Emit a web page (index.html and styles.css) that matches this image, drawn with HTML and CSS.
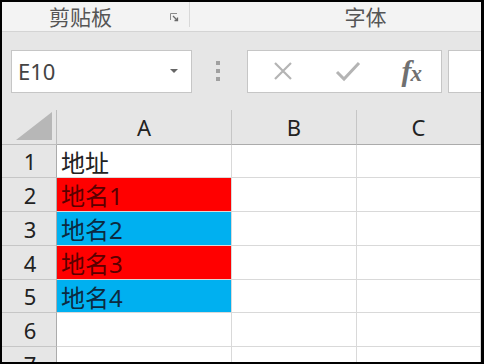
FILE: index.html
```html
<!DOCTYPE html>
<html lang="zh-CN">
<head>
    <meta charset="UTF-8">
    <meta name="viewport" content="width=device-width, initial-scale=1.0">
    <title>工作表</title>
    <link rel="stylesheet" href="styles.css">
</head>
<body>

    <div class="frame">
        <!-- Ribbon group labels -->
        <div class="ribbon-labels">
            <div class="group group-clip">
                <span>剪贴板</span>
                <svg class="launcher" width="9" height="9" viewBox="0 0 9 9">
                    <path d="M0.5 7 V0.5 H7" fill="none" stroke="#8a8a8a" stroke-width="1"/>
                    <path d="M3 3 L7.5 7.5 M4.5 7.5 H7.5 V4.5" fill="none" stroke="#6a6a6a" stroke-width="1.3"/>
                </svg>
            </div>
            <div class="group group-font"><span>字体</span></div>
        </div>

        <!-- Name box + formula bar -->
        <div class="formula-bar">
            <div class="name-box">
                <span>E10</span>
                <svg width="8" height="5" viewBox="0 0 8 5"><path d="M0 0 H8 L4 4 Z" fill="#666"/></svg>
            </div>
            <div class="grip"><i></i><i></i><i></i></div>
            <div class="fx-buttons">
                <svg width="22" height="22" viewBox="0 0 22 22">
                    <path d="M3 3 L19 19 M19 3 L3 19" stroke="#b4b4b4" stroke-width="2.2" fill="none"/>
                </svg>
                <svg width="26" height="22" viewBox="0 0 26 22">
                    <path d="M2 12 L9 19 L24 3" stroke="#b4b4b4" stroke-width="3" fill="none"/>
                </svg>
                <span class="fx"><i>f</i><i>x</i></span>
            </div>
            <div class="formula-input"></div>
        </div>

        <!-- Sheet grid -->
        <div class="sheet">
            <div class="corner">
                <svg width="36" height="28" viewBox="0 0 36 28"><path d="M36 0 V28 H0 Z" fill="#b7b7b7"/></svg>
            </div>
            <div class="col-head">A</div>
            <div class="col-head">B</div>
            <div class="col-head">C</div>

            <div class="row-head">1</div>
            <div class="cell">地址</div>
            <div class="cell"></div>
            <div class="cell"></div>

            <div class="row-head">2</div>
            <div class="cell red">地名1</div>
            <div class="cell"></div>
            <div class="cell"></div>

            <div class="row-head">3</div>
            <div class="cell blue">地名2</div>
            <div class="cell"></div>
            <div class="cell"></div>

            <div class="row-head">4</div>
            <div class="cell red">地名3</div>
            <div class="cell"></div>
            <div class="cell"></div>

            <div class="row-head">5</div>
            <div class="cell blue">地名4</div>
            <div class="cell"></div>
            <div class="cell"></div>

            <div class="row-head">6</div>
            <div class="cell"></div>
            <div class="cell"></div>
            <div class="cell"></div>

            <div class="row-head">7</div>
            <div class="cell"></div>
            <div class="cell"></div>
            <div class="cell"></div>
        </div>
    </div>

</body>
</html>
```

FILE: styles.css
```css
* {
    box-sizing: border-box;
}

body {
    margin: 0;
    background-color: #000;
    font-family: "Noto Sans", "Noto Sans CJK SC", sans-serif;
}

.frame {
    width: 479px;
    height: 360px;
    margin: 2px 3px 2px 2px;
    background-color: #e6e6e6;
    overflow: hidden;
}

/* Ribbon labels */
.ribbon-labels {
    display: flex;
    height: 30px;
    background-color: #f3f3f3;
    border-bottom: 1px solid #d4d4d4;
}

.group {
    display: flex;
    align-items: center;
    justify-content: center;
    height: 25px;
    font-family: "Noto Sans CJK SC", sans-serif;
    font-size: 21px;
    line-height: 1;
    color: #555;
}

.group-clip {
    position: relative;
    width: 188px;
    border-right: 1px solid #d8d8d8;
}

.group-clip span {
    margin-right: 30px;
    margin-top: 3px;
}

.launcher {
    position: absolute;
    right: 10px;
    top: 11px;
}

.group-font {
    flex: 1;
    padding-left: 60px;
}

.group-font span {
    margin-top: 3px;
}

/* Formula bar */
.formula-bar {
    display: flex;
    align-items: center;
    height: 78px;
    padding-left: 9px;
}

.name-box {
    display: flex;
    align-items: center;
    justify-content: space-between;
    width: 181px;
    height: 43px;
    padding: 0 13px 0 6px;
    background-color: #fff;
    border: 1px solid #c6c6c6;
    font-size: 22px;
    color: #444;
}

.grip {
    display: flex;
    flex-direction: column;
    gap: 4px;
    margin: 0 27px 0 24px;
}

.grip i {
    width: 4px;
    height: 4px;
    background-color: #a0a0a0;
}

.fx-buttons {
    display: flex;
    align-items: center;
    justify-content: space-between;
    width: 195px;
    height: 43px;
    padding: 0 20px 0 24px;
    background-color: #fff;
    border: 1px solid #c6c6c6;
}

.fx {
    font-family: "Liberation Serif", serif;
    font-size: 30px;
    font-style: italic;
    font-weight: bold;
    color: #707070;
    letter-spacing: -1px;
}

.fx i:last-child {
    font-size: 23px;
}

.formula-input {
    flex: 1;
    height: 43px;
    margin-left: 6px;
    background-color: #fff;
    border: 1px solid #c6c6c6;
    border-right: none;
}

/* Sheet */
.sheet {
    display: grid;
    grid-template-columns: 55px 175px 125px 124px;
    grid-template-rows: 35px 33px 34px 34px 34px 33px 34px 34px;
    background-color: #fff;
}

.corner {
    display: flex;
    align-items: flex-end;
    justify-content: flex-end;
    padding: 0 4px 4px 0;
    background-color: #e6e6e6;
    border-right: 1px solid #bdbdbd;
    border-bottom: 1px solid #bdbdbd;
}

.col-head {
    display: flex;
    align-items: center;
    justify-content: center;
    background-color: #e6e6e6;
    border-right: 1px solid #c6c6c6;
    border-bottom: 1px solid #ababab;
    font-size: 22px;
    color: #222;
}

.row-head {
    display: flex;
    align-items: center;
    justify-content: center;
    background-color: #e6e6e6;
    border-right: 1px solid #ababab;
    border-bottom: 1px solid #c6c6c6;
    font-size: 22px;
    color: #222;
    padding-left: 2px;
}

.cell {
    display: flex;
    align-items: center;
    padding-left: 4px;
    border-right: 1px solid #d9d9d9;
    border-bottom: 1px solid #d9d9d9;
    font-size: 24px;
    color: #222;
}

.cell.red {
    background-color: #ff0000;
    color: #5a0000;
}

.cell.blue {
    background-color: #00b0f0;
    color: #0c2a40;
}
```
